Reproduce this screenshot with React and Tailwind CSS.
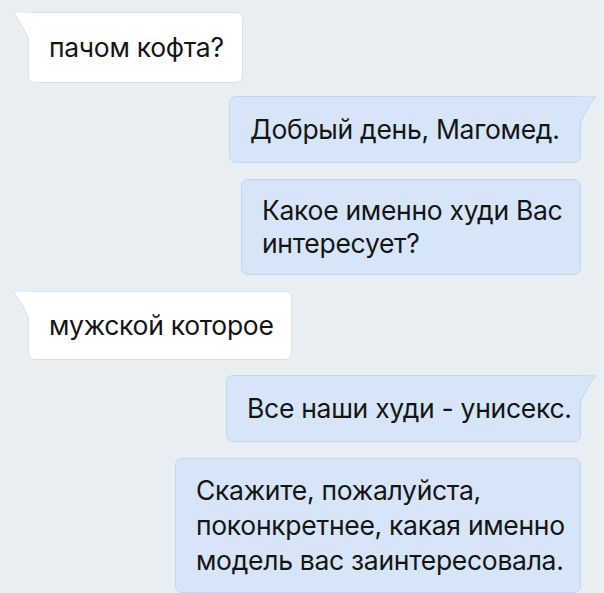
import React from 'react'

const MESSAGES = [
  { side: 'in',  w: 'w-[215px]', lines: ['пачом кофта?'], mt: 'mt-[12px]', py: 'py-[18px]' },
  { side: 'out', w: 'w-[352px]', lines: ['Добрый день, Магомед.'], mt: 'mt-[13px]', py: 'py-[16px]' },
  { side: 'out', w: 'w-[340px]', lines: ['Какое именно худи Вас', 'интересует?'], mt: 'mt-[16px]', py: 'py-[14px]', noTail: true },
  { side: 'in',  w: 'w-[264px]', lines: ['мужской которое'], mt: 'mt-[16px]', py: 'py-[17px]' },
  { side: 'out', w: 'w-[355px]', lines: ['Все наши худи - унисекс.'], mt: 'mt-[15px]', py: 'py-[16px]' },
  { side: 'out', w: 'w-[406px]', lines: ['Скажите, пожалуйста,', 'поконкретнее, какая именно', 'модель вас заинтересовала.'], mt: 'mt-[16px]', py: 'py-[14px]', lh: 'leading-[35px]', noTail: true },
]

export default function App() {
  return (
    <div className="w-[604px] h-[593px] overflow-hidden bg-[#e9eef3] flex flex-col font-['Inter','Open_Sans',sans-serif] text-[#151515]">
      {MESSAGES.map((m, i) => (
        <Bubble key={i} {...m} />
      ))}
    </div>
  )
}

function Bubble({ side, w, lines, mt, py, lh = 'leading-[33px]', noTail }) {
  const out = side === 'out'
  return (
    <div className={`relative shrink-0 ${mt} ${w} ${py} ${lh} ${out ? 'self-end mr-[23px] bg-[#d6e6f8] border-[#c3d5ea]' : 'self-start ml-[28px] bg-white border-[#dbe1e8]'} border rounded-[7px] ${noTail ? '' : out ? 'rounded-tr-none' : 'rounded-tl-none'} pl-[20px] pr-2 text-[26.5px] tracking-[-0.3px]`}>
      {!noTail && (out ? <TailRight /> : <TailLeft />)}
      {lines.map((l, i) => (
        <div key={i} className="whitespace-nowrap">{l}</div>
      ))}
    </div>
  )
}

function TailLeft() {
  return (
    <svg className="absolute left-[-17px] top-[-1px]" width="18" height="30" viewBox="0 0 18 30">
      <path d="M18 0 H1 C6 7 12 16 17 28 L18 30 Z" fill="#ffffff" />
      <path d="M17.5 0 H1 C6 7 12 16 17 28" fill="none" stroke="#dbe1e8" strokeWidth="1" />
    </svg>
  )
}

function TailRight() {
  return (
    <svg className="absolute right-[-17px] top-[-1px]" width="18" height="30" viewBox="0 0 18 30">
      <path d="M0 0 H17 C12 7 6 16 1 28 L0 30 Z" fill="#d6e6f8" />
      <path d="M0.5 0 H17 C12 7 6 16 1 28" fill="none" stroke="#c3d5ea" strokeWidth="1" />
    </svg>
  )
}
